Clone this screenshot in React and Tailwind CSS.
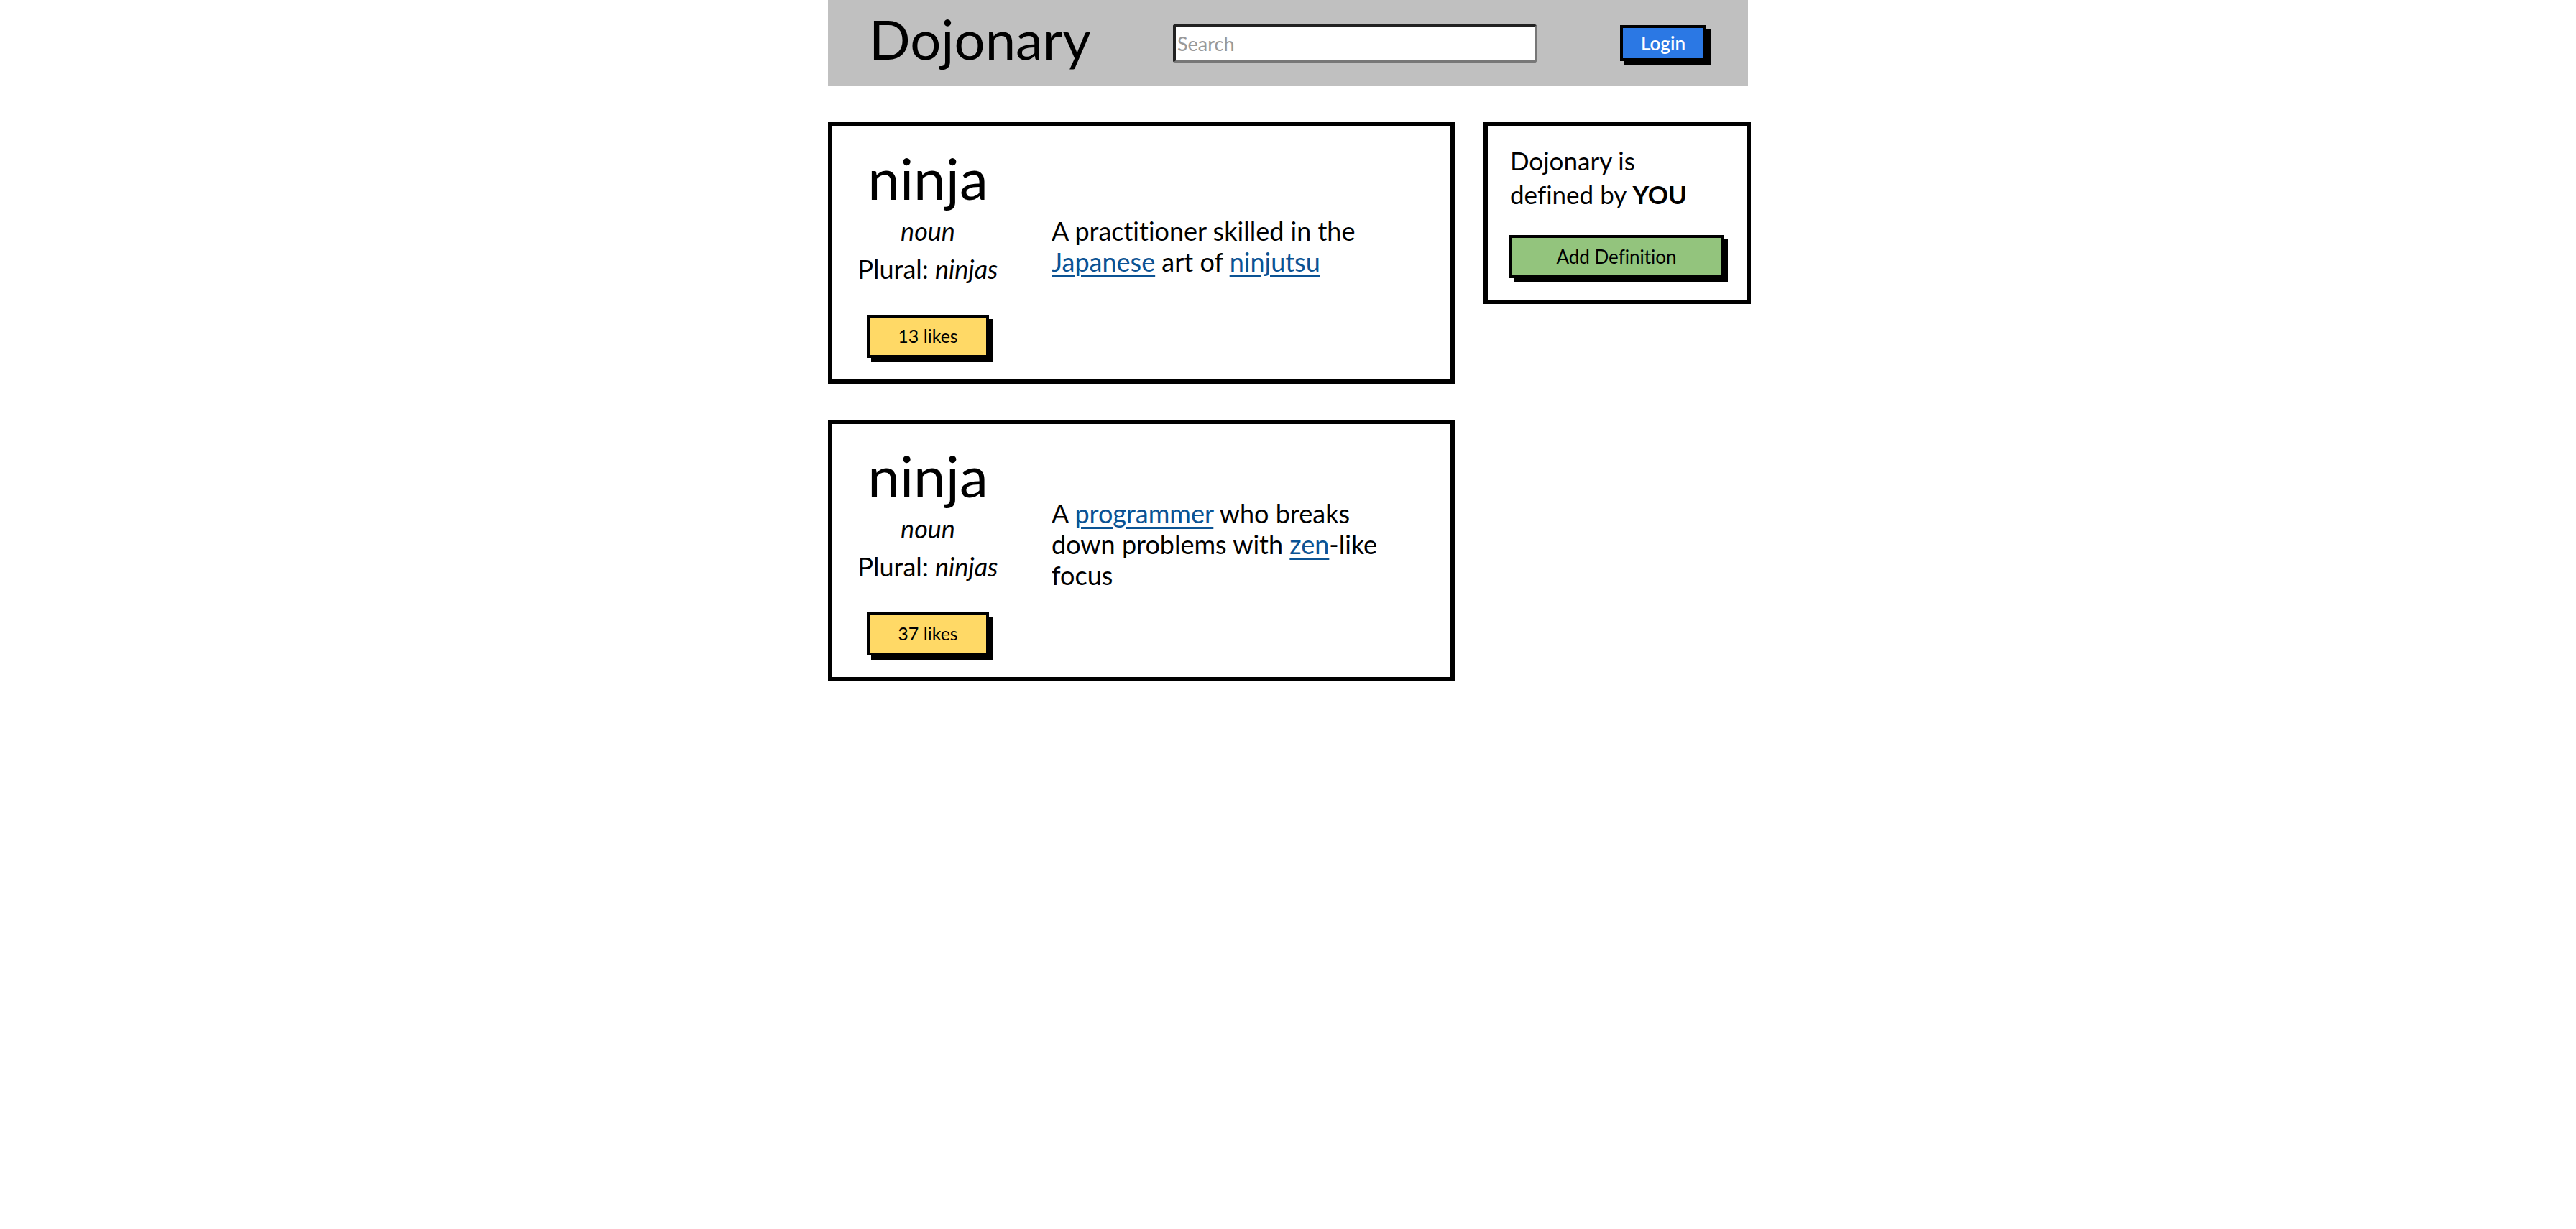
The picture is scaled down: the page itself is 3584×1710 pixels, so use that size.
import React from "react";

const font = { fontFamily: "Lato, 'Noto Sans', sans-serif" };

function Link({ children }) {
  return (
    <a
      href="#"
      className="text-[#0b5394] underline decoration-[3px] underline-offset-[5px]"
    >
      {children}
    </a>
  );
}

function Card({ likes, children }) {
  return (
    <div className="h-[364px] border-[6px] border-black bg-white flex items-center">
      <div className="w-[266px] flex flex-col items-center text-black">
        <div className="text-[80px] leading-[80px]">ninja</div>
        <div className="mt-[14px] text-[36px] leading-[40px] italic">noun</div>
        <div className="mt-[13px] text-[36px] leading-[40px]">
          Plural: <span className="italic">ninjas</span>
        </div>
        <button className="mt-[44px] w-[170px] h-[60px] border-[4px] border-black bg-[#ffd966] text-[25px] leading-none text-black shadow-[6px_6px_0_0_#000]">
          {likes} likes
        </button>
      </div>
      <div className="ml-[39px] pb-[18px] text-[36px] leading-[43px] text-black">
        {children}
      </div>
    </div>
  );
}

export default function App() {
  return (
    <div className="min-h-screen bg-white [font-variant-ligatures:none]" style={font}>
      <div className="w-[1280px] mx-auto">
        <header className="h-[120px] bg-[#c0c0c0] flex items-center">
          <div className="w-[480px] pl-[57px]">
            <div className="text-[76px] leading-[76px] text-black mb-[12px]">
              Dojonary
            </div>
          </div>
          <input
            type="text"
            placeholder="Search"
            className="w-[506px] h-[53px] bg-white rounded-[3px] border-t-[4px] border-l-[4px] border-b-[3px] border-r-[3px] border-t-[#222] border-l-[#222] border-b-[#777] border-r-[#777] pl-[2px] text-[27px] text-black placeholder:text-[#999] outline-none"
            style={font}
          />
          <button className="ml-[116px] w-[120px] h-[50px] border-[4px] border-black bg-[#2b78e4] text-white text-[26px] font-semibold leading-none shadow-[6px_6px_0_0_#000]">
            Login
          </button>
        </header>

        <div className="mt-[50px] flex items-start gap-[40px]">
          <div className="w-[872px] shrink-0 flex flex-col gap-[50px]">
            <Card likes={13}>
              A practitioner skilled in the
              <br />
              <Link>Japanese</Link> art of <Link>ninjutsu</Link>
            </Card>
            <Card likes={37}>
              A <Link>programmer</Link> who breaks
              <br />
              down problems with <Link>zen</Link>-like
              <br />
              focus
            </Card>
          </div>

          <aside className="w-[372px] shrink-0 border-[6px] border-black bg-white pl-[30px] pt-[24px] pb-[30px]">
            <div className="ml-[1px] text-[35px] leading-[47px] text-black">
              Dojonary is
              <br />
              defined by <span className="font-bold">YOU</span>
            </div>
            <button className="mt-[33px] w-[298px] h-[60px] border-[4px] border-black bg-[#93c47d] text-[26px] leading-none text-black shadow-[6px_6px_0_0_#000]">
              Add Definition
            </button>
          </aside>
        </div>
      </div>
    </div>
  );
}
